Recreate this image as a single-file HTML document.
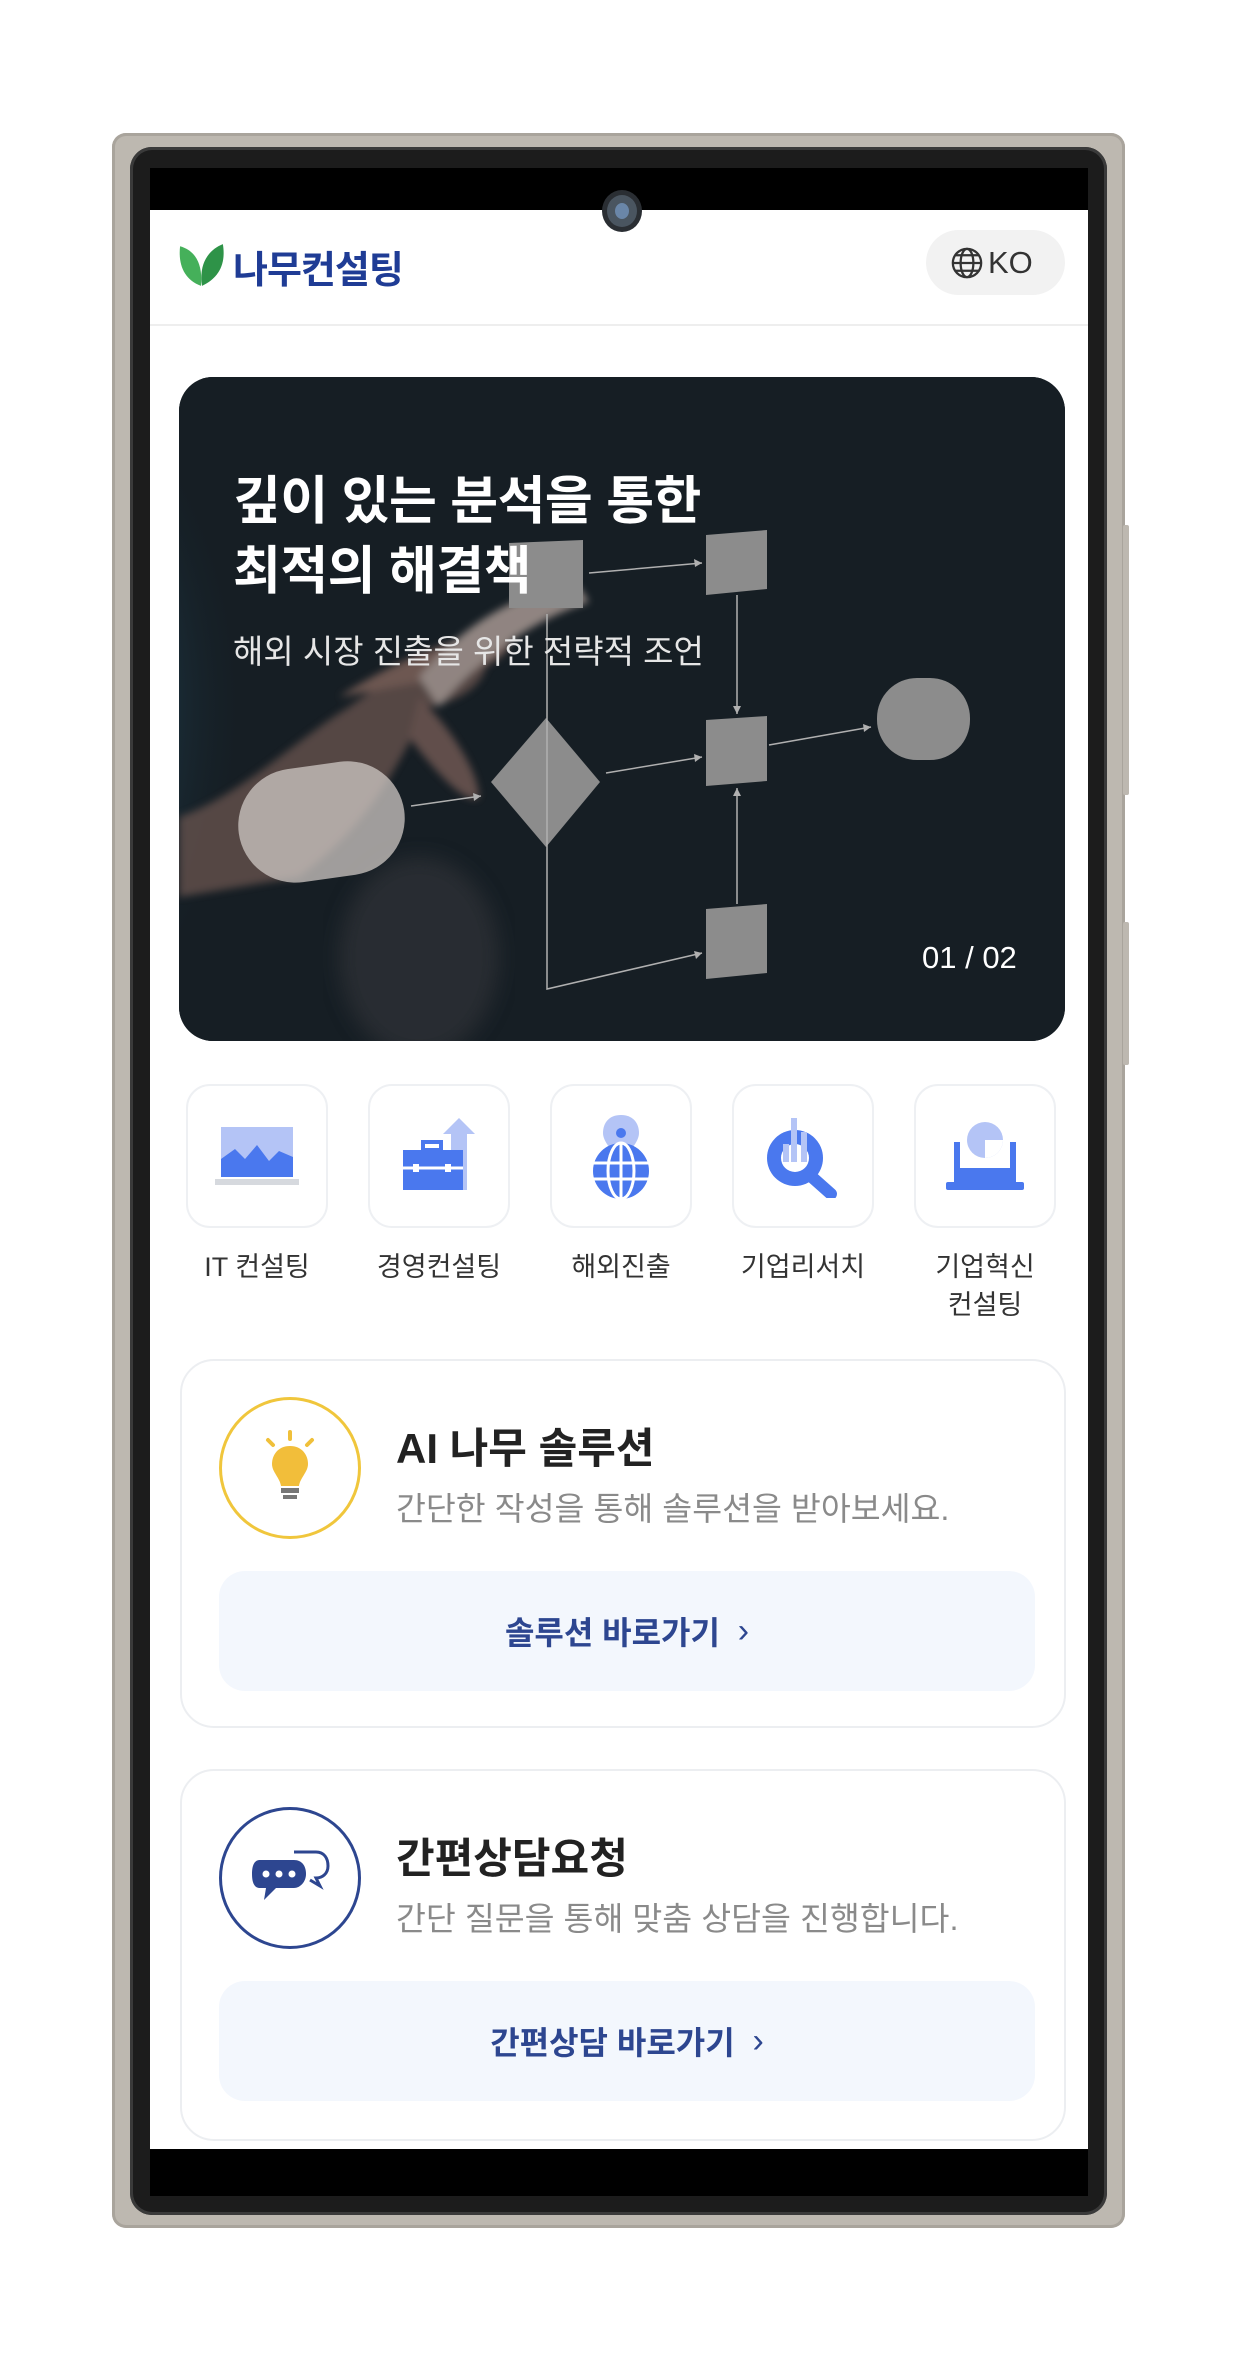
<!DOCTYPE html>
<html><head><meta charset="utf-8"><style>
*{margin:0;padding:0;box-sizing:border-box}
body{width:1245px;height:2359px;background:#fff;position:relative;overflow:hidden;font-family:"Liberation Sans","Noto Sans CJK KR",sans-serif}
.abs{position:absolute}
.frame{left:112px;top:133px;width:1013px;height:2095px;background:#bdb8b0;border-radius:14px;box-shadow:inset 0 0 0 3px #a9a49c}
.bezel{left:130px;top:147px;width:977px;height:2068px;background:#1c1c1c;border-radius:22px;box-shadow:inset 0 0 0 3px #3a3a3a}
.screen{left:150px;top:168px;width:938px;height:2028px;background:#000;overflow:hidden}
.white{left:0;top:42px;width:938px;height:1939px;background:#fff}
.cam{left:452px;top:22px;width:40px;height:42px;border-radius:50%;background:#4a5560;border:5px solid #2a2e33}
.cam:after{content:"";position:absolute;left:8px;top:8px;width:14px;height:16px;border-radius:50%;background:#6a86a8}
.hero{left:29px;top:209px;width:886px;height:664px;border-radius:34px;overflow:hidden;background:#161e24}
.ibox{width:142px;height:144px;border:2px solid #eef0f3;border-radius:24px;background:#fff;top:916px;display:flex;align-items:center;justify-content:center}
.lbl{width:180px;text-align:center;top:1080px;font-size:27px;color:#333;line-height:38px}
.card{left:30px;width:886px;border:2px solid #eceef1;border-radius:34px;background:#fff}
.circ{width:142px;height:142px;border-radius:50%;display:flex;align-items:center;justify-content:center}
.ct{font-size:42px;font-weight:bold;color:#222}
.cs{font-size:32.5px;color:#8a8a8a}
.btn{left:37px;width:816px;height:120px;background:#f3f7fd;border-radius:26px;display:flex;align-items:center;justify-content:center;font-size:32px;font-weight:bold;color:#2d4690}
</style></head><body>
<div class="abs frame"></div>
<div class="abs" style="left:1123px;top:525px;width:6px;height:270px;background:#bdb8b0;border-radius:2px"></div>
<div class="abs" style="left:1123px;top:922px;width:6px;height:143px;background:#bdb8b0;border-radius:2px"></div>
<div class="abs bezel"></div>
<div class="abs screen">
 <div class="abs white"></div>
 <div class="abs cam"></div>
 <svg class="abs" style="left:28px;top:74px" width="48" height="46" viewBox="0 0 46 44"><path d="M22 42 C6 36 0 22 2 4 C16 8 24 20 22 42Z" fill="#45b05a"/><path d="M23 42 C40 34 46 20 43 2 C28 8 20 22 23 42Z" fill="#2e9348"/></svg>
 <div class="abs" style="left:83px;top:71px;font-size:38px;font-weight:bold;color:#1f3c95;letter-spacing:-1px">나무컨설팅</div>
 <div class="abs" style="left:776px;top:62px;width:139px;height:65px;border-radius:33px;background:#f2f2f2"></div>
 <svg class="abs" style="left:800px;top:78px" width="34" height="34" viewBox="0 0 24 24" fill="none" stroke="#333" stroke-width="1.6"><circle cx="12" cy="12" r="10"/><ellipse cx="12" cy="12" rx="4.5" ry="10"/><path d="M2 12h20M4 6.5h16M4 17.5h16"/></svg>
 <div class="abs" style="left:838px;top:77px;font-size:31px;color:#333">KO</div>
 <div class="abs" style="left:0;top:156px;width:938px;height:2px;background:#eeeeee"></div>
 <div class="abs hero">
  <svg width="886" height="664" viewBox="0 0 886 664" style="position:absolute;left:0;top:0">
   <defs>
    <radialGradient id="g1" cx="0.05" cy="0.5" r="0.5"><stop offset="0" stop-color="#2a6a86"/><stop offset="0.6" stop-color="#1d3d4d"/><stop offset="1" stop-color="#161e24" stop-opacity="0"/></radialGradient>
    <filter id="b"><feGaussianBlur stdDeviation="10"/></filter>
    <filter id="b2"><feGaussianBlur stdDeviation="4"/></filter>
   </defs>
   <rect width="886" height="664" fill="#161e24"/>
   <ellipse cx="40" cy="330" rx="300" ry="400" fill="url(#g1)"/>
   <g filter="url(#b2)" opacity="0.75">
    <path d="M0 440 C60 420 120 360 170 330 C210 300 260 270 300 260 C320 290 300 320 250 330 C220 380 200 440 120 500 L0 520Z" fill="#6b5550"/>
    <path d="M160 320 C220 280 280 260 330 250 C340 270 320 290 270 300Z" fill="#8a6a60"/>
    <path d="M240 320 C280 360 300 400 300 420 C290 430 260 400 230 360Z" fill="#7a5e58"/>
    <path d="M240 300 C300 230 360 210 400 210 L410 225 C360 240 300 280 260 330Z" fill="#b9a7a0"/>
   </g>
   <g filter="url(#b)" opacity="0.5"><ellipse cx="240" cy="580" rx="80" ry="100" fill="#3a3a40"/></g>
   <g fill="#8c8c8c">
    <polygon points="330,166 404,163 404,231 330,231"/>
    <polygon points="527,158 588,153 588,212 527,218"/>
    <polygon points="367,341 421,405 367,470 312,405"/>
    <polygon points="527,343 588,339 588,404 527,409"/>
    <polygon points="527,532 588,527 588,596 527,602"/>
    <rect x="698" y="301" width="93" height="82" rx="40"/>
   </g>
   <rect x="59" y="388" width="167" height="114" rx="57" fill="#cfc8c4" opacity="0.75" transform="rotate(-8 142 445)"/>
   <g stroke="#b0b0b0" stroke-width="1.5" fill="none">
    <path d="M410 196 L523 186"/><path d="M427 396 L523 380"/><path d="M232 429 L302 419"/><path d="M590 368 L692 350"/>
    <path d="M368 237 V612 L523 576"/><path d="M558 218 V337"/><path d="M558 527 V411"/>
   </g>
   <g fill="#b0b0b0">
    <path d="M523 186 l-8 -4 l1 8z"/><path d="M523 380 l-8 -3 l1 8z"/><path d="M302 419 l-8 -3 l1 8z"/><path d="M692 350 l-8 -3 l1 8z"/><path d="M523 576 l-8 -2 l2 8z"/><path d="M558 337 l-4 -8 h8z"/><path d="M558 411 l-4 8 h8z"/>
   </g>
  </svg>
  <div class="abs" style="left:54px;top:90px;font-size:52px;font-weight:bold;color:#fff;line-height:70px;letter-spacing:-0.5px">깊이 있는 분석을 통한<br>최적의 해결책</div>
  <div class="abs" style="left:54px;top:248px;font-size:33px;color:#e6e6e6">해외 시장 진출을 위한 전략적 조언</div>
  <div class="abs" style="left:743px;top:563px;font-size:31px;color:#fff">01 / 02</div>
 </div>
 <div class="abs ibox" style="left:36px"><svg width="84" height="66" viewBox="0 0 84 66"><rect x="6" y="4" width="72" height="50" fill="#b4c4f6"/><path d="M6 54 V36 L20 26 L30 36 L42 22 L54 38 L64 28 L78 34 V54Z" fill="#4a78ee"/><rect x="0" y="56" width="84" height="6" fill="#d6d9de"/></svg></div>
 <div class="abs ibox" style="left:218px"><svg width="80" height="84" viewBox="0 0 80 84"><path d="M52 76 V20 H44 L60 4 L76 20 H68 V76Z" fill="#b4c4f6"/><rect x="4" y="36" width="60" height="40" fill="#4a78ee"/><rect x="24" y="28" width="18" height="8" fill="none" stroke="#4a78ee" stroke-width="4"/><path d="M4 54 H64" stroke="#fff" stroke-width="3"/><rect x="14" y="50" width="6" height="8" fill="#fff"/><rect x="46" y="50" width="6" height="8" fill="#fff"/></svg></div>
 <div class="abs ibox" style="left:400px"><svg width="64" height="86" viewBox="0 0 64 86"><path d="M32 2 C20 2 14 10 14 20 C14 32 32 46 32 46 C32 46 50 32 50 20 C50 10 44 2 32 2Z" fill="#b4c4f6"/><circle cx="32" cy="20" r="5" fill="#4a78ee"/><circle cx="32" cy="58" r="28" fill="#4a78ee"/><g stroke="#fff" stroke-width="3" fill="none"><path d="M4 50 H60 M4 66 H60"/><path d="M32 30 V86"/><ellipse cx="32" cy="58" rx="13" ry="28"/></g></svg></div>
 <div class="abs ibox" style="left:582px"><svg width="76" height="84" viewBox="0 0 76 84"><circle cx="30" cy="44" r="28" fill="#4a78ee"/><circle cx="30" cy="44" r="14" fill="#fff"/><rect x="26" y="4" width="6" height="44" fill="#b4c4f6"/><rect x="36" y="18" width="6" height="30" fill="#b4c4f6"/><rect x="18" y="30" width="6" height="18" fill="#b4c4f6"/><path d="M48 64 L66 80" stroke="#4a78ee" stroke-width="12" stroke-linecap="round"/></svg></div>
 <div class="abs ibox" style="left:764px"><svg width="78" height="76" viewBox="0 0 78 76"><rect x="8" y="24" width="62" height="40" fill="#4a78ee"/><rect x="14" y="24" width="50" height="26" fill="#fff"/><circle cx="39" cy="22" r="18" fill="#b4c4f6"/><path d="M39 22 H57 A18 18 0 0 1 39 40Z" fill="#fff"/><rect x="0" y="64" width="78" height="8" rx="2" fill="#4a78ee"/></svg></div>
 <div class="abs lbl" style="left:17px">IT 컨설팅</div>
 <div class="abs lbl" style="left:199px">경영컨설팅</div>
 <div class="abs lbl" style="left:381px">해외진출</div>
 <div class="abs lbl" style="left:563px">기업리서치</div>
 <div class="abs lbl" style="left:745px">기업혁신<br>컨설팅</div>
 <div class="abs card" style="top:1191px;height:369px">
  <div class="abs circ" style="left:37px;top:36px;border:3px solid #f0c63c"><svg width="60" height="76" viewBox="0 0 60 76"><g stroke="#f0c03a" stroke-width="4" stroke-linecap="round"><path d="M30 2 V9M8 10 L13 15M52 10 L47 15"/></g><path d="M30 16 C18 16 12 25 12 34 C12 42 20 48 21 56 H39 C40 48 48 42 48 34 C48 25 42 16 30 16Z" fill="#f2be3a"/><rect x="21" y="58" width="18" height="5" fill="#777"/><rect x="23" y="65" width="14" height="4" fill="#777"/></svg></div>
  <div class="abs ct" style="left:214px;top:54px">AI 나무 솔루션</div>
  <div class="abs cs" style="left:214px;top:122px">간단한 작성을 통해 솔루션을 받아보세요.</div>
  <div class="abs btn" style="top:210px">솔루션 바로가기 &nbsp;<span style="font-weight:normal;font-size:34px">›</span></div>
 </div>
 <div class="abs card" style="top:1601px;height:372px">
  <div class="abs circ" style="left:37px;top:36px;border:3px solid #2d4690"><svg width="80" height="64" viewBox="0 0 80 64"><path d="M44 6 H66 C74 6 78 12 78 20 C78 28 72 32 66 32 L70 40 L60 34" fill="none" stroke="#2d4690" stroke-width="3"/><path d="M10 14 H44 C52 14 56 20 56 28 C56 36 50 42 44 42 H26 L14 54 L16 42 H10 C4 42 2 36 2 28 C2 20 4 14 10 14Z" fill="#2d4690"/><circle cx="16" cy="28" r="3.5" fill="#fff"/><circle cx="29" cy="28" r="3.5" fill="#fff"/><circle cx="42" cy="28" r="3.5" fill="#fff"/></svg></div>
  <div class="abs ct" style="left:214px;top:54px">간편상담요청</div>
  <div class="abs cs" style="left:214px;top:122px">간단 질문을 통해 맞춤 상담을 진행합니다.</div>
  <div class="abs btn" style="top:210px">간편상담 바로가기 &nbsp;<span style="font-weight:normal;font-size:34px">›</span></div>
 </div>
</div>
</body></html>
